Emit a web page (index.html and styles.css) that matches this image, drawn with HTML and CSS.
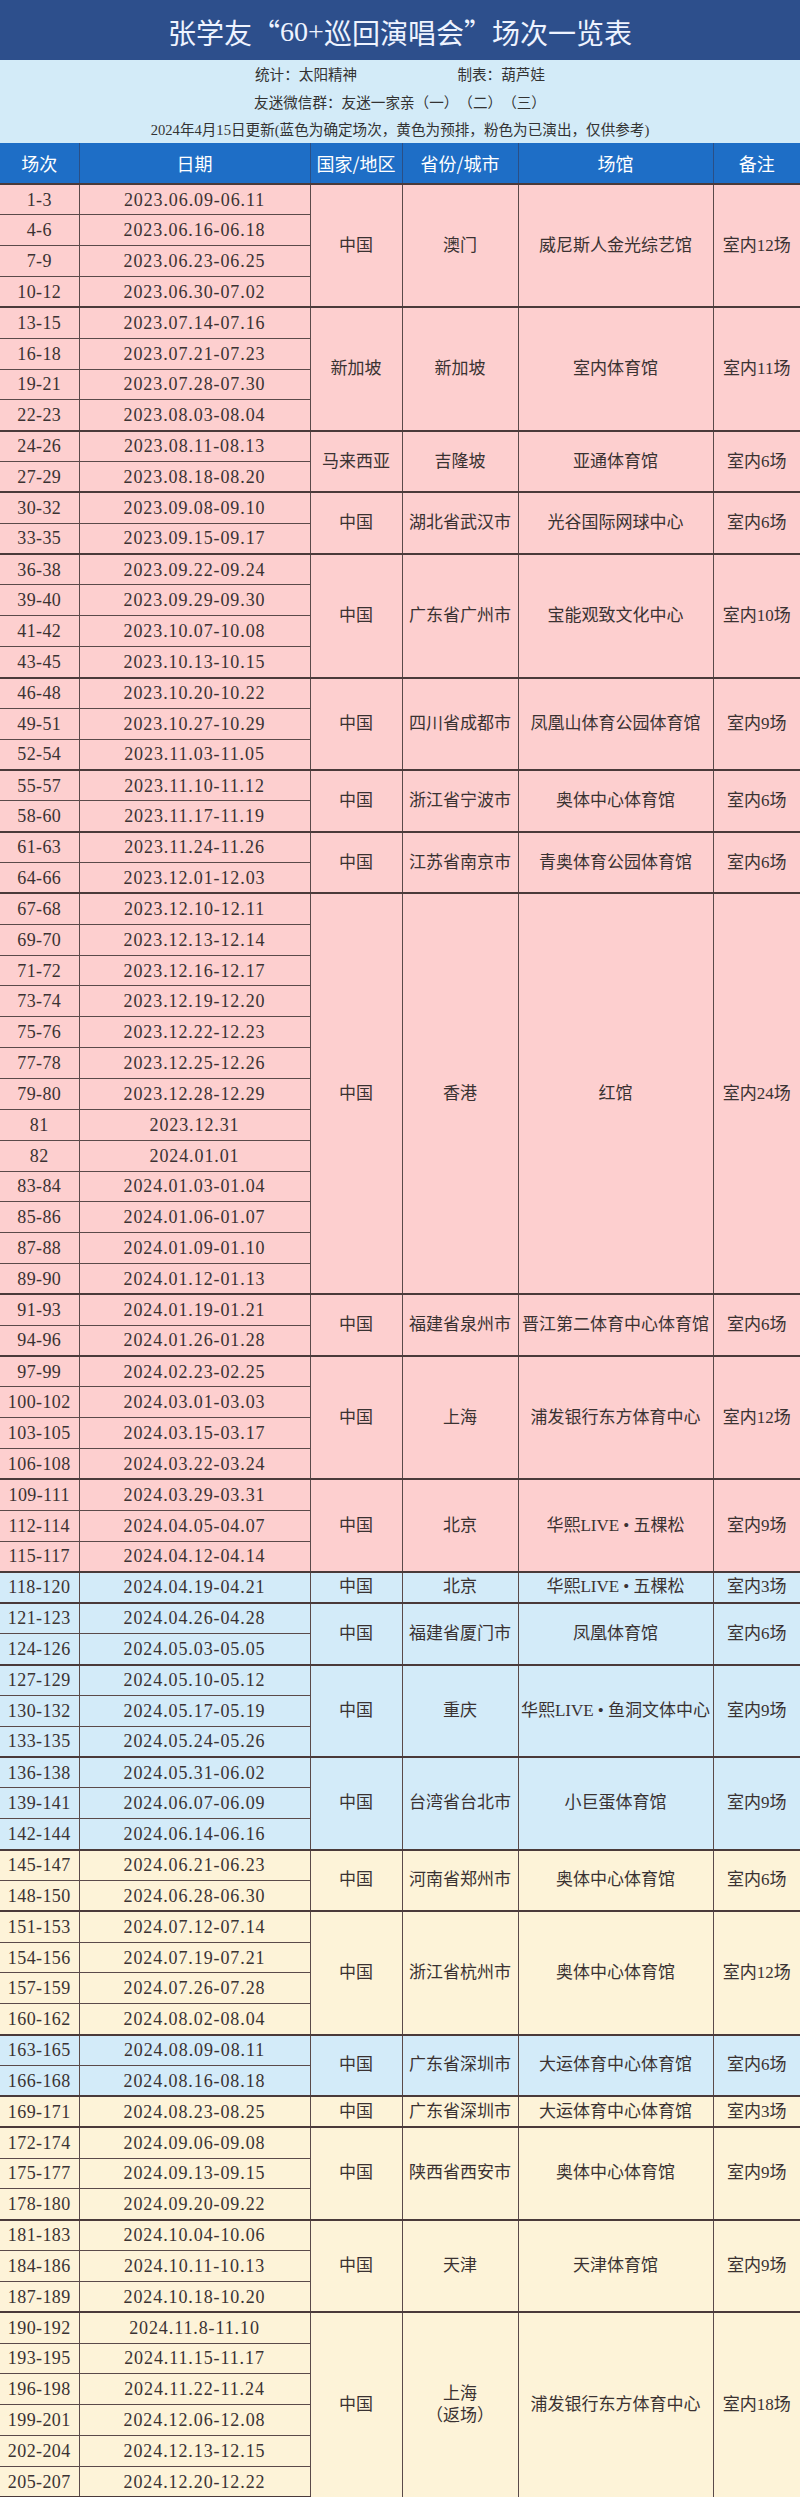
FILE: index.html
```html
<!DOCTYPE html>
<html lang="zh-CN">
<head>
<meta charset="utf-8">
<title>张学友“60+巡回演唱会”场次一览表</title>
<link rel="stylesheet" href="styles.css">
</head>
<body>
<div class="title">张学友“<span class="num">60+</span>巡回演唱会”场次一览表</div>
<div class="info">
  <div class="line split"><span>统计：太阳精神</span><span>制表：葫芦娃</span></div>
  <div class="line">友迷微信群：友迷一家亲（一）（二）（三）</div>
  <div class="line">2024年4月15日更新(蓝色为确定场次，黄色为预排，粉色为已演出，仅供参考)</div>
</div>
<table class="sched">
<colgroup><col class="c1"><col class="c2"><col class="c3"><col class="c4"><col class="c5"><col class="c6"></colgroup>
<thead>
<tr><th>场次</th><th>日期</th><th>国家/地区</th><th>省份/城市</th><th>场馆</th><th>备注</th></tr>
</thead>
<tbody class="pink">
<tr class="g"><td class="n">1-3</td><td class="d">2023.06.09-06.11</td><td rowspan="4">中国</td><td rowspan="4">澳门</td><td rowspan="4">威尼斯人金光综艺馆</td><td rowspan="4" class="r">室内12场</td></tr>
<tr><td class="n">4-6</td><td class="d">2023.06.16-06.18</td></tr>
<tr><td class="n">7-9</td><td class="d">2023.06.23-06.25</td></tr>
<tr><td class="n">10-12</td><td class="d">2023.06.30-07.02</td></tr>
<tr class="g"><td class="n">13-15</td><td class="d">2023.07.14-07.16</td><td rowspan="4">新加坡</td><td rowspan="4">新加坡</td><td rowspan="4">室内体育馆</td><td rowspan="4" class="r">室内11场</td></tr>
<tr><td class="n">16-18</td><td class="d">2023.07.21-07.23</td></tr>
<tr><td class="n">19-21</td><td class="d">2023.07.28-07.30</td></tr>
<tr><td class="n">22-23</td><td class="d">2023.08.03-08.04</td></tr>
<tr class="g"><td class="n">24-26</td><td class="d">2023.08.11-08.13</td><td rowspan="2">马来西亚</td><td rowspan="2">吉隆坡</td><td rowspan="2">亚通体育馆</td><td rowspan="2" class="r">室内6场</td></tr>
<tr><td class="n">27-29</td><td class="d">2023.08.18-08.20</td></tr>
<tr class="g"><td class="n">30-32</td><td class="d">2023.09.08-09.10</td><td rowspan="2">中国</td><td rowspan="2">湖北省武汉市</td><td rowspan="2">光谷国际网球中心</td><td rowspan="2" class="r">室内6场</td></tr>
<tr><td class="n">33-35</td><td class="d">2023.09.15-09.17</td></tr>
<tr class="g"><td class="n">36-38</td><td class="d">2023.09.22-09.24</td><td rowspan="4">中国</td><td rowspan="4">广东省广州市</td><td rowspan="4">宝能观致文化中心</td><td rowspan="4" class="r">室内10场</td></tr>
<tr><td class="n">39-40</td><td class="d">2023.09.29-09.30</td></tr>
<tr><td class="n">41-42</td><td class="d">2023.10.07-10.08</td></tr>
<tr><td class="n">43-45</td><td class="d">2023.10.13-10.15</td></tr>
<tr class="g"><td class="n">46-48</td><td class="d">2023.10.20-10.22</td><td rowspan="3">中国</td><td rowspan="3">四川省成都市</td><td rowspan="3">凤凰山体育公园体育馆</td><td rowspan="3" class="r">室内9场</td></tr>
<tr><td class="n">49-51</td><td class="d">2023.10.27-10.29</td></tr>
<tr><td class="n">52-54</td><td class="d">2023.11.03-11.05</td></tr>
<tr class="g"><td class="n">55-57</td><td class="d">2023.11.10-11.12</td><td rowspan="2">中国</td><td rowspan="2">浙江省宁波市</td><td rowspan="2">奥体中心体育馆</td><td rowspan="2" class="r">室内6场</td></tr>
<tr><td class="n">58-60</td><td class="d">2023.11.17-11.19</td></tr>
<tr class="g"><td class="n">61-63</td><td class="d">2023.11.24-11.26</td><td rowspan="2">中国</td><td rowspan="2">江苏省南京市</td><td rowspan="2">青奥体育公园体育馆</td><td rowspan="2" class="r">室内6场</td></tr>
<tr><td class="n">64-66</td><td class="d">2023.12.01-12.03</td></tr>
<tr class="g"><td class="n">67-68</td><td class="d">2023.12.10-12.11</td><td rowspan="13">中国</td><td rowspan="13">香港</td><td rowspan="13">红馆</td><td rowspan="13" class="r">室内24场</td></tr>
<tr><td class="n">69-70</td><td class="d">2023.12.13-12.14</td></tr>
<tr><td class="n">71-72</td><td class="d">2023.12.16-12.17</td></tr>
<tr><td class="n">73-74</td><td class="d">2023.12.19-12.20</td></tr>
<tr><td class="n">75-76</td><td class="d">2023.12.22-12.23</td></tr>
<tr><td class="n">77-78</td><td class="d">2023.12.25-12.26</td></tr>
<tr><td class="n">79-80</td><td class="d">2023.12.28-12.29</td></tr>
<tr><td class="n">81</td><td class="d">2023.12.31</td></tr>
<tr><td class="n">82</td><td class="d">2024.01.01</td></tr>
<tr><td class="n">83-84</td><td class="d">2024.01.03-01.04</td></tr>
<tr><td class="n">85-86</td><td class="d">2024.01.06-01.07</td></tr>
<tr><td class="n">87-88</td><td class="d">2024.01.09-01.10</td></tr>
<tr><td class="n">89-90</td><td class="d">2024.01.12-01.13</td></tr>
<tr class="g"><td class="n">91-93</td><td class="d">2024.01.19-01.21</td><td rowspan="2">中国</td><td rowspan="2">福建省泉州市</td><td rowspan="2">晋江第二体育中心体育馆</td><td rowspan="2" class="r">室内6场</td></tr>
<tr><td class="n">94-96</td><td class="d">2024.01.26-01.28</td></tr>
<tr class="g"><td class="n">97-99</td><td class="d">2024.02.23-02.25</td><td rowspan="4">中国</td><td rowspan="4">上海</td><td rowspan="4">浦发银行东方体育中心</td><td rowspan="4" class="r">室内12场</td></tr>
<tr><td class="n">100-102</td><td class="d">2024.03.01-03.03</td></tr>
<tr><td class="n">103-105</td><td class="d">2024.03.15-03.17</td></tr>
<tr><td class="n">106-108</td><td class="d">2024.03.22-03.24</td></tr>
<tr class="g"><td class="n">109-111</td><td class="d">2024.03.29-03.31</td><td rowspan="3">中国</td><td rowspan="3">北京</td><td rowspan="3">华熙LIVE • 五棵松</td><td rowspan="3" class="r">室内9场</td></tr>
<tr><td class="n">112-114</td><td class="d">2024.04.05-04.07</td></tr>
<tr><td class="n">115-117</td><td class="d">2024.04.12-04.14</td></tr>
</tbody>
<tbody class="blue">
<tr class="g"><td class="n">118-120</td><td class="d">2024.04.19-04.21</td><td>中国</td><td>北京</td><td>华熙LIVE • 五棵松</td><td class="r">室内3场</td></tr>
<tr class="g"><td class="n">121-123</td><td class="d">2024.04.26-04.28</td><td rowspan="2">中国</td><td rowspan="2">福建省厦门市</td><td rowspan="2">凤凰体育馆</td><td rowspan="2" class="r">室内6场</td></tr>
<tr><td class="n">124-126</td><td class="d">2024.05.03-05.05</td></tr>
<tr class="g"><td class="n">127-129</td><td class="d">2024.05.10-05.12</td><td rowspan="3">中国</td><td rowspan="3">重庆</td><td rowspan="3">华熙LIVE • 鱼洞文体中心</td><td rowspan="3" class="r">室内9场</td></tr>
<tr><td class="n">130-132</td><td class="d">2024.05.17-05.19</td></tr>
<tr><td class="n">133-135</td><td class="d">2024.05.24-05.26</td></tr>
<tr class="g"><td class="n">136-138</td><td class="d">2024.05.31-06.02</td><td rowspan="3">中国</td><td rowspan="3">台湾省台北市</td><td rowspan="3">小巨蛋体育馆</td><td rowspan="3" class="r">室内9场</td></tr>
<tr><td class="n">139-141</td><td class="d">2024.06.07-06.09</td></tr>
<tr><td class="n">142-144</td><td class="d">2024.06.14-06.16</td></tr>
</tbody>
<tbody class="yellow">
<tr class="g"><td class="n">145-147</td><td class="d">2024.06.21-06.23</td><td rowspan="2">中国</td><td rowspan="2">河南省郑州市</td><td rowspan="2">奥体中心体育馆</td><td rowspan="2" class="r">室内6场</td></tr>
<tr><td class="n">148-150</td><td class="d">2024.06.28-06.30</td></tr>
<tr class="g"><td class="n">151-153</td><td class="d">2024.07.12-07.14</td><td rowspan="4">中国</td><td rowspan="4">浙江省杭州市</td><td rowspan="4">奥体中心体育馆</td><td rowspan="4" class="r">室内12场</td></tr>
<tr><td class="n">154-156</td><td class="d">2024.07.19-07.21</td></tr>
<tr><td class="n">157-159</td><td class="d">2024.07.26-07.28</td></tr>
<tr><td class="n">160-162</td><td class="d">2024.08.02-08.04</td></tr>
</tbody>
<tbody class="blue">
<tr class="g"><td class="n">163-165</td><td class="d">2024.08.09-08.11</td><td rowspan="2">中国</td><td rowspan="2">广东省深圳市</td><td rowspan="2">大运体育中心体育馆</td><td rowspan="2" class="r">室内6场</td></tr>
<tr><td class="n">166-168</td><td class="d">2024.08.16-08.18</td></tr>
</tbody>
<tbody class="yellow">
<tr class="g"><td class="n">169-171</td><td class="d">2024.08.23-08.25</td><td>中国</td><td>广东省深圳市</td><td>大运体育中心体育馆</td><td class="r">室内3场</td></tr>
<tr class="g"><td class="n">172-174</td><td class="d">2024.09.06-09.08</td><td rowspan="3">中国</td><td rowspan="3">陕西省西安市</td><td rowspan="3">奥体中心体育馆</td><td rowspan="3" class="r">室内9场</td></tr>
<tr><td class="n">175-177</td><td class="d">2024.09.13-09.15</td></tr>
<tr><td class="n">178-180</td><td class="d">2024.09.20-09.22</td></tr>
<tr class="g"><td class="n">181-183</td><td class="d">2024.10.04-10.06</td><td rowspan="3">中国</td><td rowspan="3">天津</td><td rowspan="3">天津体育馆</td><td rowspan="3" class="r">室内9场</td></tr>
<tr><td class="n">184-186</td><td class="d">2024.10.11-10.13</td></tr>
<tr><td class="n">187-189</td><td class="d">2024.10.18-10.20</td></tr>
<tr class="g"><td class="n">190-192</td><td class="d">2024.11.8-11.10</td><td rowspan="6">中国</td><td rowspan="6" class="two">上海<br>（返场）</td><td rowspan="6">浦发银行东方体育中心</td><td rowspan="6" class="r">室内18场</td></tr>
<tr><td class="n">193-195</td><td class="d">2024.11.15-11.17</td></tr>
<tr><td class="n">196-198</td><td class="d">2024.11.22-11.24</td></tr>
<tr><td class="n">199-201</td><td class="d">2024.12.06-12.08</td></tr>
<tr><td class="n">202-204</td><td class="d">2024.12.13-12.15</td></tr>
<tr class="last"><td class="n">205-207</td><td class="d">2024.12.20-12.22</td></tr>
</tbody>
</table>
</body>
</html>
```
FILE: styles.css
```css
html, body {
  margin: 0;
  padding: 0;
}
body {
  width: 800px;
  font-family: "Liberation Serif", "Noto Sans CJK SC", serif;
  color: #3a3232;
  background: #fdf3d8;
  text-spacing-trim: space-all;
}
.title {
  height: 60px;
  background: #2d4f8c;
  color: #eef3ff;
  display: flex;
  align-items: center;
  justify-content: center;
  font-family: "Noto Sans CJK SC", sans-serif;
  font-size: 28px;
  padding-top: 4px;
  box-sizing: border-box;
}
.title .num {
  font-family: "Liberation Serif", serif;
}
.info {
  height: 83px;
  box-sizing: border-box;
  padding-top: 2px;
  background: #d3ebf8;
  display: flex;
  flex-direction: column;
  align-items: center;
  font-family: "Liberation Serif", "Noto Sans CJK SC", serif;
  font-size: 14.6px;
  line-height: 27.5px;
  color: #333;
}
.info .split {
  width: 290px;
  display: flex;
  justify-content: space-between;
}
.sched {
  width: 800px;
  border-collapse: collapse;
  table-layout: fixed;
}
.c1 { width: 79px; }
.c2 { width: 231px; }
.c3 { width: 92px; }
.c4 { width: 116px; }
.c5 { width: 195px; }
.c6 { width: 87px; }
.sched th {
  background: #1e6ec6;
  color: #fff;
  font-weight: normal;
  font-family: "Noto Sans CJK SC", sans-serif;
  font-size: 18px;
  height: 40px;
  padding: 0;
  border-left: 1px solid #2a4f86;
  border-bottom: 1px solid #3a3a4a;
}
.sched th:first-child {
  border-left: none;
}
.sched tr {
  height: 30.85px;
}
.sched td {
  border: 1px solid #5a4a4a;
  text-align: center;
  vertical-align: middle;
  padding: 0;
  font-size: 17px;
  line-height: 20px;
  white-space: nowrap;
  overflow: hidden;
}
.sched td:first-child {
  border-left: none;
}
.sched td.r {
  border-right: none;
}
.sched td.n,
.sched td.d {
  font-size: 18px;
  letter-spacing: 0.9px;
}
.sched td.n {
  letter-spacing: 0.4px;
}
.sched tr.g > td {
  border-top: 2px solid #4a3a3a;
}
.sched tr.last > td {
  border-bottom: 2px solid #4a3a3a;
}
.sched td.two {
  line-height: 22px;
}
.pink td { background: #fdcfcf; }
.blue td { background: #d3ebf9; }
.yellow td { background: #fdf3d8; }
```
